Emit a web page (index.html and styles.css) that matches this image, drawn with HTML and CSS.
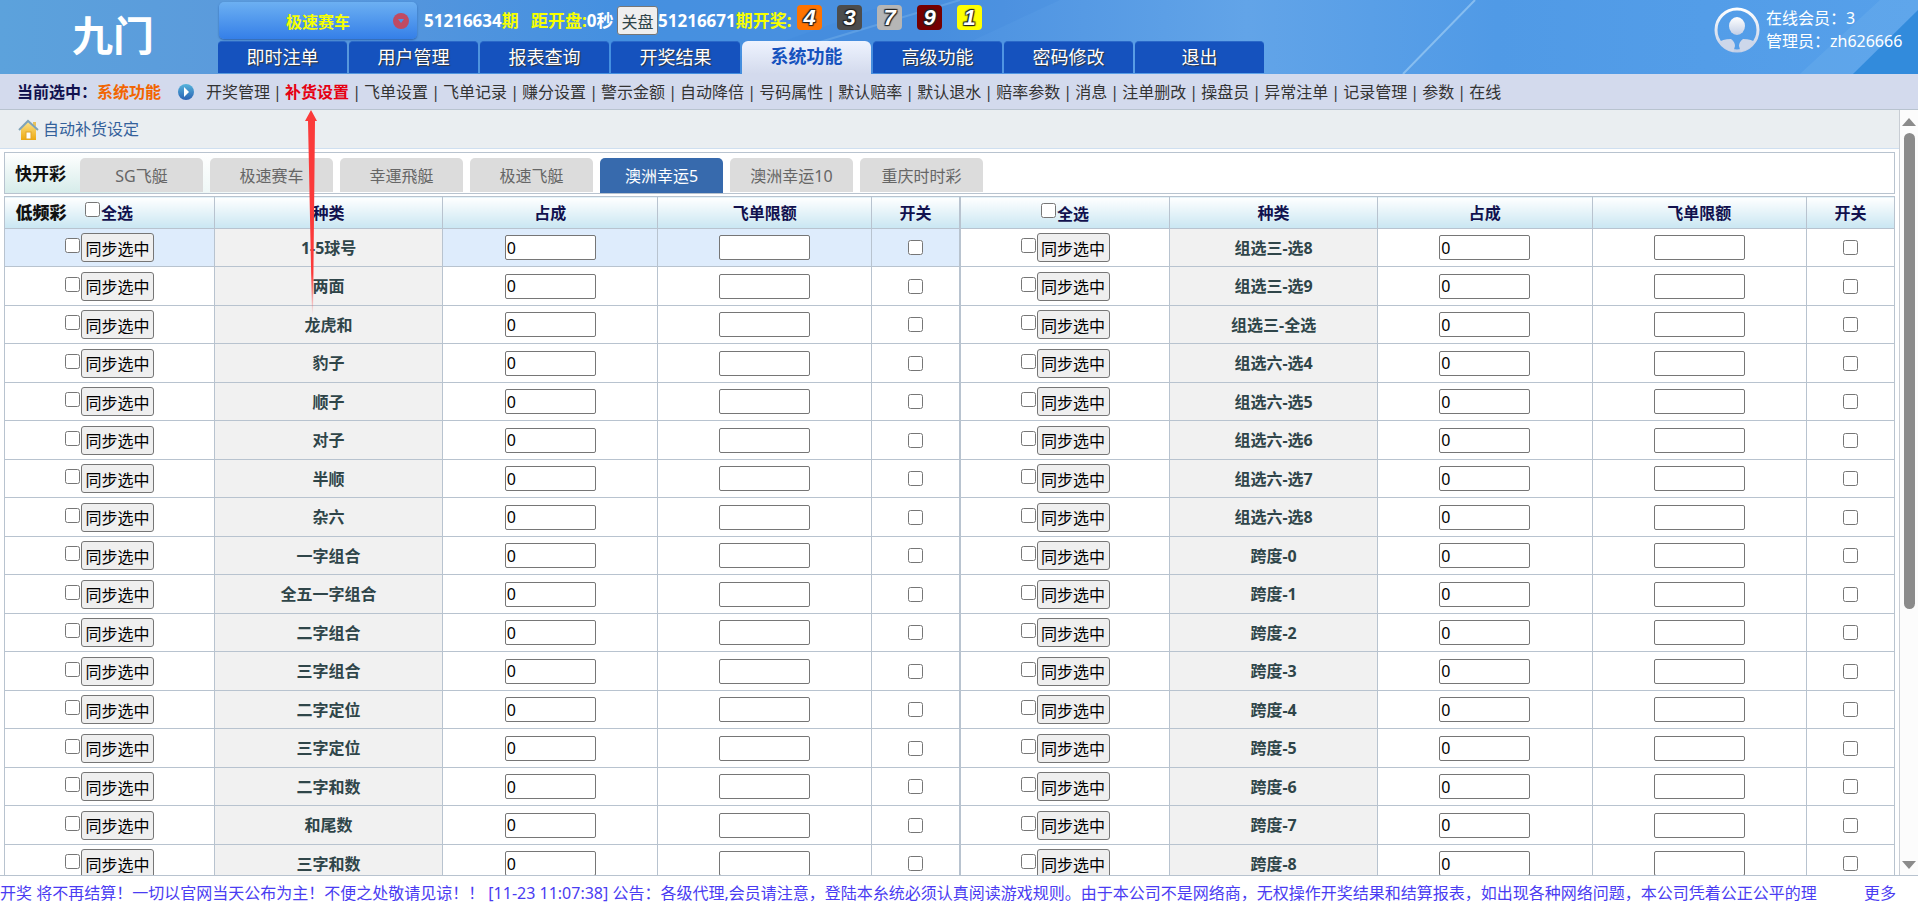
FILE: index.html
```html
<!DOCTYPE html>
<html lang="zh-CN">
<head>
    <meta charset="UTF-8">
    <meta name="viewport" content="width=device-width, initial-scale=1.0">
    <title>自动补货设定</title>
    <link rel="stylesheet" href="styles.css">
</head>
<body>
    <header class="header">
        <svg class="header-rays" viewBox="0 0 1918 74" preserveAspectRatio="none" aria-hidden="true">
            <path d="M690 74L900 0H1060L900 74Z" fill="#2f7fd6" opacity=".12"/>
            <path d="M760 60L960 0" stroke="#9fd0f5" stroke-width="2" opacity=".25"/>
            <path d="M1403 74L1475 0" stroke="#a9d4f7" stroke-width="2" opacity=".6"/>
            <path d="M1800 74L1880 0H1918V74Z" fill="#6fb2ee" opacity=".35"/>
            <path d="M1853 74L1918 10V74Z" fill="#1f80d6" opacity=".7"/>
        </svg>
        <h1 class="logo">九门</h1>
        <div class="header-main">
            <div class="status">
                <button class="game-select" type="button">
                    <span>极速赛车</span>
                    <svg width="16" height="16" viewBox="0 0 16 16" aria-hidden="true">
                        <circle cx="8" cy="8" r="8" fill="#c04a62"/>
                        <path d="M5 6H11L8 10Z" fill="#4a90e8"/>
                    </svg>
                </button>
                <div class="round">51216634<em>期</em></div>
                <div class="countdown"><em>距开盘:</em>0秒</div>
                <button class="close-btn" type="button">关盘</button>
                <div class="result">51216671<em>期开奖:</em></div>
                <div class="balls">
                    <span class="ball ball-4">4</span>
                    <span class="ball ball-3">3</span>
                    <span class="ball ball-7">7</span>
                    <span class="ball ball-9">9</span>
                    <span class="ball ball-1">1</span>
                </div>
            </div>
            <nav class="main-nav">
                <a href="#">即时注单</a>
                <a href="#">用户管理</a>
                <a href="#">报表查询</a>
                <a href="#">开奖结果</a>
                <a href="#" class="active">系统功能</a>
                <a href="#">高级功能</a>
                <a href="#">密码修改</a>
                <a href="#">退出</a>
            </nav>
        </div>
        <div class="user">
            <svg width="48" height="48" viewBox="0 0 48 48" aria-hidden="true">
                <defs>
                    <linearGradient id="avatar" x1="0" y1="0" x2="0" y2="1">
                        <stop offset="0" stop-color="#fff"/>
                        <stop offset="1" stop-color="#c3cfe6"/>
                    </linearGradient>
                    <clipPath id="avatarClip"><circle cx="24" cy="24" r="22"/></clipPath>
                </defs>
                <circle cx="24" cy="24" r="21" fill="none" stroke="url(#avatar)" stroke-width="3"/>
                <ellipse cx="24" cy="20" rx="8" ry="9" fill="url(#avatar)"/>
                <path d="M5 37Q9 33 18 33Q22 36 22 40L20 47H5ZM43 37Q39 33 30 33Q26 36 26 40L28 47H43Z" fill="#cdd7ea" clip-path="url(#avatarClip)"/>
            </svg>
            <div class="user-text">
                <div>在线会员：3</div>
                <div>管理员：zh626666</div>
            </div>
        </div>
    </header>

    <nav class="sub-nav">
        <span class="current">当前选中：</span>
        <span class="current-name">系统功能</span>
        <svg class="current-icon" width="16" height="16" viewBox="0 0 16 16" aria-hidden="true">
            <defs>
                <linearGradient id="play" x1="0" y1="0" x2="0" y2="1">
                    <stop offset="0" stop-color="#55b4dc"/>
                    <stop offset="1" stop-color="#2a62b4"/>
                </linearGradient>
            </defs>
            <circle cx="8" cy="8" r="8" fill="url(#play)"/>
            <path d="M6 3L11 8L6 13Z" fill="#fff"/>
        </svg>
        <ul class="sub-links">
            <li><a href="#">开奖管理</a></li>
            <li><a href="#" class="active">补货设置</a></li>
            <li><a href="#">飞单设置</a></li>
            <li><a href="#">飞单记录</a></li>
            <li><a href="#">赚分设置</a></li>
            <li><a href="#">警示金额</a></li>
            <li><a href="#">自动降倍</a></li>
            <li><a href="#">号码属性</a></li>
            <li><a href="#">默认赔率</a></li>
            <li><a href="#">默认退水</a></li>
            <li><a href="#">赔率参数</a></li>
            <li><a href="#">消息</a></li>
            <li><a href="#">注单删改</a></li>
            <li><a href="#">操盘员</a></li>
            <li><a href="#">异常注单</a></li>
            <li><a href="#">记录管理</a></li>
            <li><a href="#">参数</a></li>
            <li><a href="#">在线</a></li>
        </ul>
    </nav>

    <div class="workspace">
        <main class="content">
            <div class="page-title">
                <svg width="21" height="21" viewBox="0 0 21 21" aria-hidden="true">
                    <defs>
                        <linearGradient id="house" x1="0" y1="0" x2="0" y2="1">
                            <stop offset="0" stop-color="#fbe28a"/>
                            <stop offset="1" stop-color="#eda810"/>
                        </linearGradient>
                    </defs>
                    <path d="M15 3H18V8L15 6Z" fill="#e9c25a"/>
                    <path d="M3 10L10 3L18 10V21H3Z" fill="url(#house)"/>
                    <path d="M1 11L10 2L20 11" fill="none" stroke="#7fa3b8" stroke-width="2"/>
                    <rect x="8" y="13" width="5" height="7" fill="#fff" stroke="#e0a52a"/>
                </svg>
                <h2>自动补货设定</h2>
            </div>

            <div class="game-bar">
                <strong class="bar-label">快开彩</strong>
                <div class="game-tabs">
                    <a href="#">SG飞艇</a>
                    <a href="#">极速赛车</a>
                    <a href="#">幸運飛艇</a>
                    <a href="#">极速飞艇</a>
                    <a href="#" class="active">澳洲幸运5</a>
                    <a href="#">澳洲幸运10</a>
                    <a href="#">重庆时时彩</a>
                </div>
            </div>

            <table class="settings">
                <colgroup>
                    <col class="col-pick"><col class="col-kind"><col class="col-share"><col class="col-limit"><col class="col-switch">
                    <col class="col-pick"><col class="col-kind-2"><col class="col-share"><col class="col-limit"><col class="col-switch">
                </colgroup>
                <thead>
                    <tr>
                        <th>
                            <div class="head-pick">
                                <strong class="bar-label">低频彩</strong>
                                <label class="check-all"><input type="checkbox">全选</label>
                            </div>
                        </th>
                        <th>种类</th>
                        <th>占成</th>
                        <th>飞单限额</th>
                        <th>开关</th>
                        <th class="split"><label class="check-all"><input type="checkbox">全选</label></th>
                        <th>种类</th>
                        <th>占成</th>
                        <th>飞单限额</th>
                        <th>开关</th>
                    </tr>
                </thead>
                <tbody id="rows"></tbody>
            </table>
        </main>
        <div class="scrollbar" aria-hidden="true">
            <svg width="14" height="8" viewBox="0 0 14 8"><path d="M0 8L7 0L14 8Z" fill="#8b8b8b"/></svg>
            <div class="track"><div class="thumb"></div></div>
            <svg width="14" height="8" viewBox="0 0 14 8"><path d="M0 0L7 8L14 0Z" fill="#8b8b8b"/></svg>
        </div>
    </div>

    <footer class="notice">
        <div class="notice-text">开奖 将不再结算！一切以官网当天公布为主！不便之处敬请见谅！！ [11-23 11:07:38] 公告：各级代理,会员请注意，登陆本糸统必须认真阅读游戏规则。由于本公司不是网络商，无权操作开奖结果和结算报表，如出现各种网络问题，本公司凭着公正公平的理</div>
        <a href="#" class="more">更多</a>
    </footer>

    <!-- arrow pointing at the current sub menu item -->
    <svg class="pointer" width="14" height="210" viewBox="0 0 14 210" aria-hidden="true">
        <defs>
            <linearGradient id="fade" x1="0" y1="0" x2="0" y2="1">
                <stop offset=".8" stop-color="#fb3a3a"/>
                <stop offset="1" stop-color="#fb3a3a" stop-opacity="0"/>
            </linearGradient>
        </defs>
        <path d="M7 0L13 11H11L9 205H8L4 11H1Z" fill="url(#fade)"/>
    </svg>

    <script src="script.js"></script>
</body>
</html>
```
FILE: styles.css
```css
* {
    box-sizing: border-box;
}
body {
    margin: 0;
    height: 100vh;
    display: flex;
    flex-direction: column;
    overflow: hidden;
    background: #fff;
    font-family: "Noto Sans", "Noto Sans CJK SC", sans-serif;
    font-size: 16px;
    line-height: 22px;
    color: #333;
    white-space: nowrap;
}
a {
    color: inherit;
    text-decoration: none;
}
em {
    font-style: normal;
    color: #f6ff00;
}
input, button {
    margin: 0;
    font-family: inherit;
    font-size: 16px;
}
input[type="checkbox"] {
    width: 15px;
    height: 15px;
}

/* header */
.header {
    position: relative;
    display: flex;
    flex: none;
    height: 74px;
    background: linear-gradient(90deg, #5ca2dc 0%, #5a98dc 16%, #4590e0 32%, #4a90e0 48%, #62a4e8 65%, #509ae6 78%, #56a0ea 100%);
    color: #fff;
}
.header-rays {
    position: absolute;
    width: 100%;
    height: 100%;
}
.logo {
    position: relative;
    flex: none;
    width: 218px;
    margin: 0;
    padding-left: 72px;
    font-size: 41px;
    line-height: 70px;
}
.header-main {
    position: relative;
    flex: 1;
}
.status {
    display: flex;
    align-items: center;
    height: 41px;
    padding-left: 1px;
    font-size: 17px;
    font-weight: bold;
}
.game-select {
    display: flex;
    align-items: center;
    justify-content: flex-end;
    gap: 43px;
    width: 198px;
    height: 37px;
    margin-right: 7px;
    padding: 0 8px;
    border: 0;
    border-radius: 5px;
    background: linear-gradient(#6cb0f2, #357fe8);
    box-shadow: 0 1px 2px #2a62b0;
    color: #f6ff00;
    font-weight: bold;
}
.round {
    width: 107px;
}
.countdown {
    width: 86px;
}
.close-btn {
    width: 41px;
    height: 29px;
    padding: 0;
    border: 1px solid #767676;
    border-radius: 3px;
    background: #efefef;
    color: #2f4549;
}
.result {
    width: 139px;
}
.balls {
    display: flex;
    gap: 15px;
    margin-bottom: 6px;
}
.ball {
    width: 25px;
    height: 25px;
    border-radius: 4px;
    font: italic bold 22px/25px "Liberation Sans", sans-serif;
    text-align: center;
    text-shadow: 1px 1px 1px #222, -1px -1px 1px #222, 1px -1px 1px #222, -1px 1px 1px #222;
}
.ball-4 { background: #ff7300; }
.ball-3 { background: #4c4c4c; }
.ball-7 { background: #b6b6b6; }
.ball-9 { background: #750000; }
.ball-1 { background: #ffff00; }

.main-nav {
    display: flex;
    gap: 2px;
    height: 33px;
}
.main-nav a {
    width: 129px;
    height: 32px;
    border-top: 1px solid #2a68c8;
    border-radius: 4px 4px 0 0;
    background: #1552be;
    font-size: 18px;
    line-height: 31px;
    text-align: center;
    text-shadow: 1px 1px 1px #333;
}
.main-nav a.active {
    height: 33px;
    border-top: 0;
    border-radius: 6px 6px 0 0;
    background: linear-gradient(#eef3fe, #d3daed);
    color: #1552be;
    font-weight: bold;
    text-shadow: none;
}
.user {
    position: relative;
    display: flex;
    gap: 5px;
    width: 205px;
    padding-top: 6px;
}
.user-text {
    padding-top: 1px;
    line-height: 23px;
}

/* sub menu */
.sub-nav {
    display: flex;
    flex: none;
    align-items: center;
    height: 36px;
    padding-left: 17px;
    border-bottom: 1px solid #b8c3cf;
    background: #d3daed;
}
.current {
    width: 80px;
    color: #11114e;
    font-weight: bold;
}
.current-name {
    color: #f26500;
    font-weight: bold;
}
.current-icon {
    margin: 0 12px 0 17px;
}
.sub-links {
    display: flex;
    margin: 0;
    padding: 0;
    list-style: none;
}
.sub-links li + li::before {
    content: "|";
    display: inline-block;
    width: 15px;
    text-align: center;
}
.sub-links .active {
    color: #e60012;
    font-weight: bold;
}

/* work area */
.workspace {
    display: flex;
    flex: 1;
    min-height: 0;
    border-bottom: 1px solid #b8c3cf;
}
.content {
    flex: 1;
    overflow: hidden;
    border-right: 1px solid #c8cdd4;
}
.page-title {
    display: flex;
    align-items: center;
    gap: 4px;
    height: 39px;
    padding-left: 18px;
    border-bottom: 1px solid #cfdff0;
    background: #eaeef1;
}
.page-title h2 {
    margin: 0;
    font-size: 16px;
    font-weight: normal;
    color: #34619b;
}
.game-bar {
    display: flex;
    height: 42px;
    margin: 3px 4px 2px;
    border: 1px solid #b8c3cf;
    background: linear-gradient(90deg, rgba(255, 255, 255, 0) 80px, #fff 280px), linear-gradient(#fff, #d6ecea);
}
.bar-label {
    width: 52px;
    font-size: 17px;
    color: #111;
}
.game-bar .bar-label {
    margin: 0 13px 0 10px;
    line-height: 42px;
}
.game-tabs {
    display: flex;
    gap: 7px;
    padding-top: 5px;
}
.game-tabs a {
    width: 123px;
    height: 34px;
    border-radius: 5px 5px 0 0;
    background: #dcdcdc;
    color: #666;
    line-height: 37px;
    text-align: center;
}
.game-tabs a.active {
    height: 35px;
    background: #376aad;
    color: #fff;
}

.settings {
    width: calc(100% - 8px);
    margin: 0 4px;
    border-collapse: collapse;
    table-layout: fixed;
    text-align: center;
}
.col-pick { width: 11.1%; }
.col-kind { width: 12.1%; }
.col-kind-2 { width: 11%; }
.col-switch { width: 88px; }
.settings th,
.settings td {
    padding: 0;
    border: 1px solid #b8c3cf;
}
.settings .split {
    border-left-width: 2px;
}
.settings th {
    height: 32px;
    background: linear-gradient(#fff, #c9e6f2);
    color: #11114e;
}
.settings td {
    height: 38px;
}
.settings tr:nth-child(even) td {
    height: 39px;
}
.settings .kind {
    background: #f1f1f1;
    color: #2f4549;
    font-weight: bold;
}
.settings .selected td:nth-child(-n+5):not(.kind) {
    background: #deecfc;
}
.head-pick {
    display: flex;
    align-items: center;
    gap: 18px;
    padding-left: 10px;
}
.check-all {
    display: inline-flex;
    gap: 1px;
}
.pick {
    display: flex;
    justify-content: center;
    gap: 1px;
}
.pick input {
    margin-top: 5px;
}
.pick button {
    width: 73px;
    height: 29px;
    padding: 0;
    border: 1px solid #767676;
    border-radius: 3px;
    background: #efefef;
    color: #000;
}
.settings input[type="text"] {
    display: block;
    width: 91px;
    height: 25px;
    margin: 0 auto;
    padding: 0 1px;
    border: 1px solid #767676;
    border-radius: 2px;
    color: #000;
}
.settings td > input[type="checkbox"] {
    display: block;
    margin: 0 auto;
}

/* scrollbar */
.scrollbar {
    display: flex;
    flex-direction: column;
    align-items: center;
    gap: 7px;
    width: 18px;
    padding: 8px 0 6px;
    background: #fcfcfc;
}
.track {
    flex: 1;
}
.thumb {
    width: 11px;
    height: 66%;
    border-radius: 6px;
    background: #8b8b8b;
}

/* notice */
.notice {
    display: flex;
    flex: none;
    align-items: center;
    gap: 26px;
    height: 32px;
    padding: 2px 22px 0 0;
    color: #4a3cf2;
}
.notice-text {
    flex: 1;
    overflow: hidden;
}

.pointer {
    position: absolute;
    top: 110px;
    left: 304px;
}
```
FILE: script.js
```javascript
const left = ['1-5球号', '两面', '龙虎和', '豹子', '顺子', '对子', '半顺', '杂六', '一字组合',
    '全五一字组合', '二字组合', '三字组合', '二字定位', '三字定位', '二字和数', '和尾数', '三字和数'];
const right = ['组选三-选8', '组选三-选9', '组选三-全选', '组选六-选4', '组选六-选5', '组选六-选6',
    '组选六-选7', '组选六-选8', '跨度-0', '跨度-1', '跨度-2', '跨度-3', '跨度-4', '跨度-5',
    '跨度-6', '跨度-7', '跨度-8'];

function cells(name, split) {
    return `
        <td class="${split}">
            <div class="pick">
                <input type="checkbox" aria-label="${name} 选择">
                <button type="button">同步选中</button>
            </div>
        </td>
        <td class="kind">${name}</td>
        <td><input type="text" value="0" aria-label="${name} 占成"></td>
        <td><input type="text" aria-label="${name} 飞单限额"></td>
        <td><input type="checkbox" aria-label="${name} 开关"></td>
    `;
}

document.getElementById('rows').innerHTML = left.map((name, i) => `
    <tr class="${i === 0 ? 'selected' : ''}">${cells(name, '')}${cells(right[i], 'split')}</tr>
`).join('');
```
